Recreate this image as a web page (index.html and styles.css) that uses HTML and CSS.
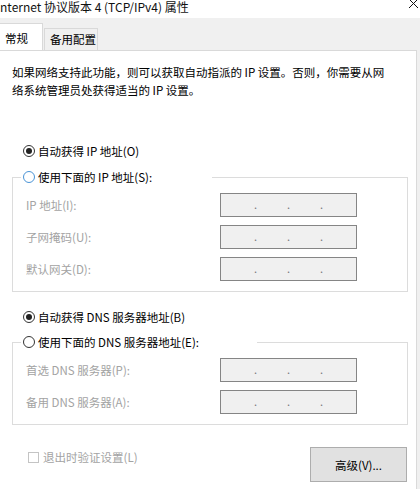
FILE: index.html
```html
<!DOCTYPE html>
<html lang="zh-CN">
<head>
<meta charset="utf-8">
<title>Internet 协议版本 4 (TCP/IPv4) 属性</title>
<link rel="stylesheet" href="styles.css">
</head>
<body>
<div class="titlebar">
  <span class="title">nternet 协议版本 4 (TCP/IPv4) 属性</span>
  <svg class="close" width="10" height="10" viewBox="0 0 10 10"><path d="M1 -1 L10 8 M10 -1 L1 8" stroke="#111" stroke-width="1" fill="none"/></svg>
</div>
<div class="tabstrip">
  <div class="tab active">常规</div>
  <div class="tab">备用配置</div>
</div>
<div class="panel">
  <p class="desc">如果网络支持此功能，则可以获取自动指派的 IP 设置。否则，你需要从网<br>络系统管理员处获得适当的 IP 设置。</p>

  <div class="radio-row first"><span class="radio checked"></span><span>自动获得 IP 地址(O)</span></div>
  <fieldset class="group">
    <legend class="legend ip"><span class="radio focus"></span><span>使用下面的 IP 地址(S):</span></legend>
    <div class="rows">
      <div class="row"><span class="label">IP 地址(I):</span><div class="ipbox"><span>.</span><span>.</span><span>.</span></div></div>
      <div class="row"><span class="label">子网掩码(U):</span><div class="ipbox"><span>.</span><span>.</span><span>.</span></div></div>
      <div class="row"><span class="label">默认网关(D):</span><div class="ipbox"><span>.</span><span>.</span><span>.</span></div></div>
    </div>
  </fieldset>

  <div class="radio-row second"><span class="radio checked"></span><span>自动获得 DNS 服务器地址(B)</span></div>
  <fieldset class="group">
    <legend class="legend dns"><span class="radio"></span><span>使用下面的 DNS 服务器地址(E):</span></legend>
    <div class="rows">
      <div class="row"><span class="label">首选 DNS 服务器(P):</span><div class="ipbox"><span>.</span><span>.</span><span>.</span></div></div>
      <div class="row"><span class="label">备用 DNS 服务器(A):</span><div class="ipbox"><span>.</span><span>.</span><span>.</span></div></div>
    </div>
  </fieldset>

  <div class="footer">
    <div class="check-row"><span class="checkbox"></span><span>退出时验证设置(L)</span></div>
    <div class="button">高级(V)...</div>
  </div>
</div>
</body>
</html>
```
FILE: styles.css
```css
html, body {
  margin: 0;
  padding: 0;
}
body {
  width: 420px;
  height: 489px;
  overflow: hidden;
  background: #f0f0f0;
  font-family: "Noto Sans CJK SC", "Noto Sans", sans-serif;
  font-size: 11.5px;
  color: #000;
}
.titlebar {
  height: 18px;
  background: #fff;
  display: flex;
  justify-content: space-between;
  align-items: flex-start;
}
.title {
  font-size: 12px;
  line-height: 14px;
  color: #111;
}
.close {
  margin-right: 2px;
  display: block;
}
.tabstrip {
  height: 32px;
  display: flex;
  align-items: flex-end;
  background: #f0f0f0;
}
.tab {
  box-sizing: border-box;
  height: 22px;
  width: 54px;
  border: 1px solid #d9d9d9;
  border-bottom: none;
  background: #f0f0f0;
  padding-left: 5px;
  line-height: 21px;
  margin-left: 1px;
}
.tab.active {
  height: 27px;
  width: 43px;
  background: #fff;
  margin-left: 0;
  border-left: none;
  padding-left: 5px;
  line-height: 29px;
}
.panel {
  width: 417px;
  height: 439px;
  box-sizing: border-box;
  background: #fff;
  border-right: 1px solid #dadada;
  border-top: 1px solid #d9d9d9;
  padding: 12px 0 0 12px;
}
.desc {
  margin: 0;
  line-height: 18px;
}
.radio-row {
  display: flex;
  align-items: center;
  height: 16px;
  margin-left: 11px;
  gap: 3px;
}
.radio-row.first {
  margin-top: 44px;
  margin-bottom: 10px;
}
.radio-row.second {
  margin-top: 17px;
  margin-bottom: 9px;
}
.radio {
  box-sizing: border-box;
  width: 12px;
  height: 12px;
  border: 1px solid #333;
  border-radius: 50%;
  display: flex;
  align-items: center;
  justify-content: center;
  background: #fff;
  flex: none;
}
.radio.checked::after {
  content: "";
  width: 6px;
  height: 6px;
  border-radius: 50%;
  background: #222;
}
.radio.focus {
  border-color: #4a94d6;
}
.group {
  width: 396px;
  box-sizing: border-box;
  margin: 0;
  padding: 0 0 10px 0;
  border: 1px solid #dcdcdc;
  min-width: 0;
}
.legend {
  box-sizing: border-box;
  display: flex;
  align-items: center;
  gap: 3px;
  height: 16px;
  margin-left: 8px;
  padding: 0 0 0 2px;
}
.legend.ip {
  width: 191px;
}
.legend.dns {
  width: 236px;
}
.rows {
  display: flex;
  flex-direction: column;
  gap: 8px;
  margin-top: 8px;
  padding-left: 13px;
}
.row {
  display: flex;
  align-items: center;
  height: 24px;
}
.label {
  width: 194px;
  color: #a3a3a3;
  flex: none;
}
.ipbox {
  box-sizing: border-box;
  width: 137px;
  height: 24px;
  border: 1px solid #858585;
  background: #f0f0f0;
  display: flex;
  justify-content: center;
  align-items: center;
  gap: 30px;
  color: #777;
  font-size: 11px;
  line-height: 11px;
  padding-bottom: 2px;
}
.footer {
  display: flex;
  justify-content: space-between;
  align-items: flex-start;
  margin-top: 22px;
  width: 395px;
}
.check-row {
  display: flex;
  align-items: center;
  gap: 4px;
  margin-left: 16px;
  margin-top: 2px;
  height: 16px;
  color: #a3a3a3;
}
.checkbox {
  box-sizing: border-box;
  width: 11px;
  height: 11px;
  border: 1px solid #c4c4c4;
  background: #fff;
  flex: none;
}
.button {
  box-sizing: border-box;
  width: 97px;
  height: 35px;
  border: 1px solid #adadad;
  background: #e1e1e1;
  display: flex;
  align-items: center;
  justify-content: center;
}
```
